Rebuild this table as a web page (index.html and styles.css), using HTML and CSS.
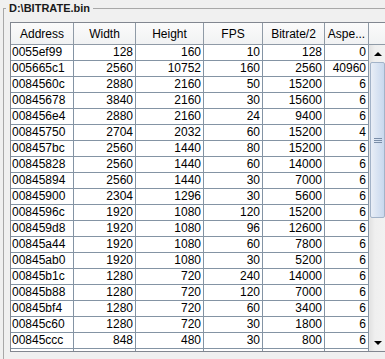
FILE: index.html
```html
<!DOCTYPE html>
<html>
<head>
<meta charset="utf-8">
<link rel="stylesheet" href="styles.css">
</head>
<body>
<fieldset class="group">
  <legend class="title">D:\BITRATE.bin</legend>
  <div class="pane">
    <div class="viewport">
      <table class="grid">
        <colgroup>
          <col class="c1"><col class="c2"><col class="c3"><col class="c4"><col class="c5"><col class="c6">
        </colgroup>
        <thead>
          <tr><th>Address</th><th>Width</th><th>Height</th><th>FPS</th><th>Bitrate/2</th><th>Aspe...</th></tr>
        </thead>
        <tbody>
          <tr><td class="l">0055ef99</td><td>128</td><td>160</td><td>10</td><td>128</td><td>0</td></tr>
          <tr><td class="l">005665c1</td><td>2560</td><td>10752</td><td>160</td><td>2560</td><td>40960</td></tr>
          <tr><td class="l">0084560c</td><td>2880</td><td>2160</td><td>50</td><td>15200</td><td>6</td></tr>
          <tr><td class="l">00845678</td><td>3840</td><td>2160</td><td>30</td><td>15600</td><td>6</td></tr>
          <tr><td class="l">008456e4</td><td>2880</td><td>2160</td><td>24</td><td>9400</td><td>6</td></tr>
          <tr><td class="l">00845750</td><td>2704</td><td>2032</td><td>60</td><td>15200</td><td>4</td></tr>
          <tr><td class="l">008457bc</td><td>2560</td><td>1440</td><td>80</td><td>15200</td><td>6</td></tr>
          <tr><td class="l">00845828</td><td>2560</td><td>1440</td><td>60</td><td>14000</td><td>6</td></tr>
          <tr><td class="l">00845894</td><td>2560</td><td>1440</td><td>30</td><td>7000</td><td>6</td></tr>
          <tr><td class="l">00845900</td><td>2304</td><td>1296</td><td>30</td><td>5600</td><td>6</td></tr>
          <tr><td class="l">0084596c</td><td>1920</td><td>1080</td><td>120</td><td>15200</td><td>6</td></tr>
          <tr><td class="l">008459d8</td><td>1920</td><td>1080</td><td>96</td><td>12600</td><td>6</td></tr>
          <tr><td class="l">00845a44</td><td>1920</td><td>1080</td><td>60</td><td>7800</td><td>6</td></tr>
          <tr><td class="l">00845ab0</td><td>1920</td><td>1080</td><td>30</td><td>5200</td><td>6</td></tr>
          <tr><td class="l">00845b1c</td><td>1280</td><td>720</td><td>240</td><td>14000</td><td>6</td></tr>
          <tr><td class="l">00845b88</td><td>1280</td><td>720</td><td>120</td><td>7000</td><td>6</td></tr>
          <tr><td class="l">00845bf4</td><td>1280</td><td>720</td><td>60</td><td>3400</td><td>6</td></tr>
          <tr><td class="l">00845c60</td><td>1280</td><td>720</td><td>30</td><td>1800</td><td>6</td></tr>
          <tr><td class="l">00845ccc</td><td>848</td><td>480</td><td>30</td><td>800</td><td>6</td></tr>
          <tr><td class="l"></td><td></td><td></td><td></td><td></td><td></td></tr>
        </tbody>
      </table>
    </div>
    <div class="vbar">
      <div class="corner"></div>
      <div class="track">
        <div class="btn"><span class="arrow up"></span></div>
        <div class="thumb"><span class="grip"></span></div>
        <div class="rest"></div>
        <div class="btn"><span class="arrow down"></span></div>
      </div>
    </div>
  </div>
</fieldset>
</body>
</html>
```

FILE: styles.css
```css
html, body {
  margin: 0;
  padding: 0;
  background: #f0f0f0;
  overflow: hidden;
  width: 385px;
  height: 359px;
}

body {
  font-family: "Liberation Sans", Arial, sans-serif;
  font-size: 12px;
  color: #000;
}

.group {
  margin: 1px 0 0 3px;
  padding: 7px 0 0 6px;
  border: 1px solid #a8a8a8;
  border-right: none;
  border-bottom: none;
  width: 382px;
  height: 358px;
  box-sizing: border-box;
  min-width: 0;
}

.title {
  font-size: 11px;
  font-weight: bold;
  line-height: 14px;
  padding: 0 3px;
  margin-left: -4px;
  color: #1a1a1a;
}

.pane {
  display: flex;
  width: 375px;
  border: 1px solid #828790;
  border-right: none;
  background: #fff;
}

.viewport {
  width: 358px;
  height: 328px;
  overflow: hidden;
}

.grid {
  table-layout: fixed;
  border-collapse: separate;
  border-spacing: 0;
  width: 358px;
}

.c1 { width: 63px; }
.c2 { width: 62px; }
.c3 { width: 68px; }
.c4 { width: 59px; }
.c5 { width: 62px; }
.c6 { width: 44px; }

.grid th {
  height: 21px;
  padding: 0;
  font-weight: normal;
  text-align: center;
  background: linear-gradient(#fbfbfb, #f1f2f3);
  border-right: 1px solid #8f9aa6;
  border-bottom: 1px solid #8f9aa6;
  white-space: nowrap;
  overflow: hidden;
}

.grid td {
  height: 15px;
  line-height: 15px;
  padding: 0 2px 0 0;
  text-align: right;
  background: #fff;
  border-right: 1px solid #8494a4;
  border-bottom: 1px solid #8494a4;
  white-space: nowrap;
  overflow: hidden;
}

.grid td.l {
  text-align: left;
  padding: 0 0 0 1px;
}

.vbar {
  width: 17px;
  display: flex;
  flex-direction: column;
  background: #f0f0f0;
}

.corner {
  height: 21px;
  background: linear-gradient(#fbfbfb, #f1f2f3);
  border-bottom: 1px solid #8f9aa6;
}

.track {
  height: 306px;
  display: flex;
  flex-direction: column;
  background: linear-gradient(90deg, #e3e3e3, #efefef 30%, #f2f2f2);
  border-left: 1px solid #e8e8e8;
}

.btn {
  height: 17px;
  display: flex;
  align-items: center;
  justify-content: center;
}

.arrow {
  width: 0;
  height: 0;
  border-left: 4px solid transparent;
  border-right: 4px solid transparent;
}

.arrow.up { border-bottom: 4px solid #000; }
.arrow.down { border-top: 4px solid #000; }

.thumb {
  height: 156px;
  margin: 0 1px 0 0;
  border: 1px solid #a3b3c8;
  border-radius: 2px;
  box-sizing: border-box;
  background: linear-gradient(90deg, #e9eef6, #d8e3f2 50%, #c9d8ee);
  display: flex;
  align-items: center;
  justify-content: center;
}

.grip {
  width: 8px;
  height: 5px;
  border-top: 1px solid #7a8ea8;
  border-bottom: 1px solid #7a8ea8;
  box-sizing: border-box;
  position: relative;
}

.grip::after {
  content: "";
  position: absolute;
  left: 0;
  right: 0;
  top: 1px;
  border-top: 1px solid #7a8ea8;
}

.rest {
  flex: 1;
}
```
